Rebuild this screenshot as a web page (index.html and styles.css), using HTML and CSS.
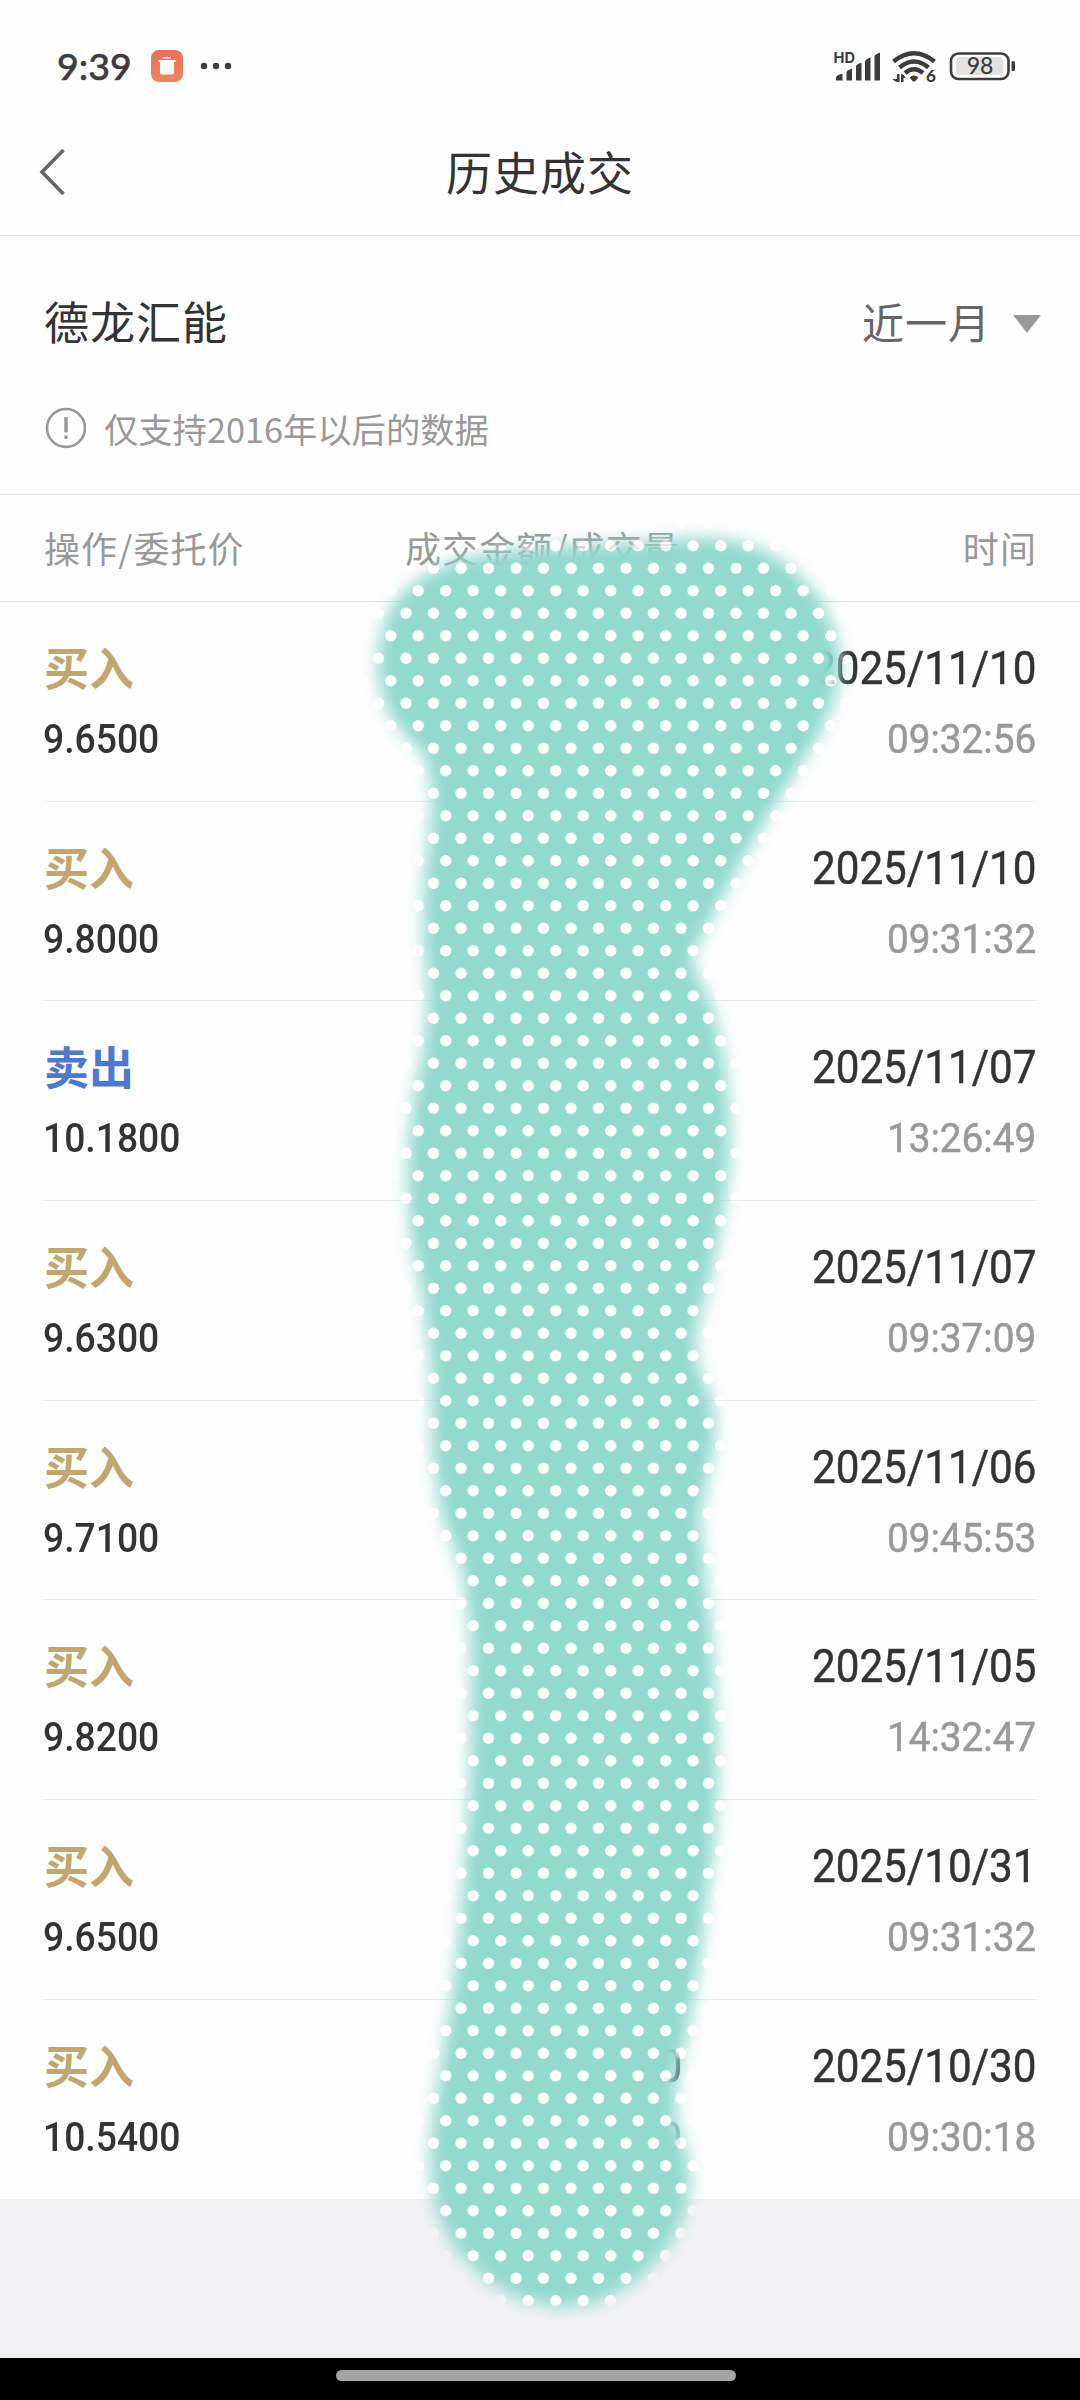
FILE: index.html
```html
<!DOCTYPE html>
<html lang="zh-CN">
<head>
<meta charset="utf-8">
<title>历史成交</title>
<link rel="stylesheet" href="styles.css">
</head>
<body>
<div class="screen">
  <div class="status">
    <span class="clock">9:39</span>
    <svg class="app" width="34" height="34" viewBox="0 0 34 34"><defs><linearGradient id="og" x1="0" y1="0" x2="0" y2="1"><stop offset="0" stop-color="#ea7058"/><stop offset="1" stop-color="#ea8660"/></linearGradient></defs><rect x="1" y="1" width="32" height="32" rx="8" fill="url(#og)"/><path d="M13 8h8v1.500h-8zM8.500 11h17v2h-1.500v10.500q0 2-2 2h-10q-2 0-2-2V13H8.500z" fill="#fff"/></svg>
    <svg class="more" width="34" height="8" viewBox="0 0 34 8"><g fill="#3c3c3c"><circle cx="4" cy="4" r="3.200"/><circle cx="16" cy="4" r="3.200"/><circle cx="28" cy="4" r="3.200"/></g></svg>
    <svg class="signals" width="190" height="40" viewBox="830 46 190 40">
      <text class="hd" x="833.500" y="62.500" textLength="21.500" lengthAdjust="spacingAndGlyphs">HD</text>
      <g fill="#3c3c3c">
        <path d="M836 80.500v-3q0-2 6.500-4v7zM846.500 80.500v-8q0-2 5.500-4v12zM856 80.500v-14q0-2 5.500-4v18zM865 80.500v-19q0-2 5.500-4v23zM874.500 80.500v-24q0-2 5.500-4v28z"/>
        <path d="M909.500 77.500q4.500-4 9 0l-3 3.500q-1.500 1-3 0z"/>
        <path d="M892.500 79h4.500v-5h2.500v8h-2.500q-2 0-4.500-3zM901 82v-8q3 0 4.500 4h-2v4z"/>
      </g>
      <g fill="none" stroke="#3c3c3c" stroke-width="4.500"><path d="M893.500 61.500q20.500-16.500 41 0M899.500 67.500q14.500-12 29 0M905 73q9-7.500 18 0"/></g>
      <text class="six" x="926" y="82">6</text>
      <rect x="951" y="53.500" width="57.500" height="25.500" rx="7.500" fill="#fff" stroke="#3c3c3c" stroke-width="2.600"/>
      <rect x="956" y="57" width="47" height="18" rx="3.500" fill="#e2e2e2"/>
      <text class="pct" x="980" y="74" text-anchor="middle">98</text>
      <rect x="1011.500" y="61" width="3.500" height="10" rx="1.500" fill="#3c3c3c"/>
    </svg>
  </div>
  <header class="nav">
    <svg class="back" width="28" height="48" viewBox="0 0 28 48"><path d="M24.500 2L3 24l21.500 22" fill="none" stroke="#666" stroke-width="3.600"/></svg>
    <h1 class="title">历史成交</h1>
  </header>
  <section class="filter">
    <div class="filter-row"><span class="stock">德龙汇能</span><span class="period">近一月<i class="caret"></i></span></div>
    <div class="notice"><svg width="42" height="42" viewBox="0 0 42 42"><circle cx="22" cy="21" r="19" fill="none" stroke="#999" stroke-width="2.600"/><path d="M22 10v15.500M22 28.500v3.500" stroke="#999" stroke-width="3.400"/></svg><span>仅支持2016年以后的数据</span></div>
  </section>
  <div class="thead"><span>操作/委托价</span><span class="mid">成交金额/成交量</span><span class="end">时间</span></div>
  <main class="list">
    <div class="row"><div class="left"><span class="op">买入</span><span class="price">9.6500</span></div><div class="right"><span class="date">2025/11/10</span><span class="time">09:32:56</span></div></div>
    <div class="row"><div class="left"><span class="op">买入</span><span class="price">9.8000</span></div><div class="right"><span class="date">2025/11/10</span><span class="time">09:31:32</span></div></div>
    <div class="row"><div class="left"><span class="op sell">卖出</span><span class="price">10.1800</span></div><div class="right"><span class="date">2025/11/07</span><span class="time">13:26:49</span></div></div>
    <div class="row"><div class="left"><span class="op">买入</span><span class="price">9.6300</span></div><div class="right"><span class="date">2025/11/07</span><span class="time">09:37:09</span></div></div>
    <div class="row"><div class="left"><span class="op">买入</span><span class="price">9.7100</span></div><div class="right"><span class="date">2025/11/06</span><span class="time">09:45:53</span></div></div>
    <div class="row"><div class="left"><span class="op">买入</span><span class="price">9.8200</span></div><div class="right"><span class="date">2025/11/05</span><span class="time">14:32:47</span></div></div>
    <div class="row"><div class="left"><span class="op">买入</span><span class="price">9.6500</span></div><div class="right"><span class="date">2025/10/31</span><span class="time">09:31:32</span></div></div>
    <div class="row"><div class="left"><span class="op">买入</span><span class="price">10.5400</span></div><div class="amount"><span class="date">0</span><span class="time">0</span></div><div class="right"><span class="date">2025/10/30</span><span class="time">09:30:18</span></div></div>
  </main>
  <div class="backdrop"></div>
  <div class="homebar"><i></i></div>
  <svg class="brush" width="1080" height="2400" viewBox="0 0 1080 2400">
    <defs>
      <pattern id="dots" width="27.500" height="45" patternUnits="userSpaceOnUse"><rect width="27.500" height="45" fill="#92d9ce"/><circle cx="5.700" cy="5.700" r="5.700" fill="#fff"/><circle cx="21" cy="28.200" r="5.700" fill="#fff"/></pattern>
      <filter id="soft" x="300" y="450" width="620" height="1930" filterUnits="userSpaceOnUse"><feMorphology operator="erode" radius="1"/><feGaussianBlur stdDeviation="8"/></filter>
      <mask id="stroke" maskUnits="userSpaceOnUse" x="0" y="0" width="1080" height="2400"><path filter="url(#soft)" fill="#fff" d="M701 536L640 541 560 545 502 550 455 559 427 572 402 591 386 613 377 645 377 680 386 712 404 737 425 758 431 800 428 833 423 880 422 933 426 985 426 1010 422 1050 412 1100 407 1150 406 1190 410 1242 422 1303 429 1364 431 1455 440 1515 451 1545 463 1582 469 1640 470 1690 468 1788 462 1879 456 1950 450 2000 442 2050 434 2100 428 2150 430 2183 437 2217 454 2250 484 2281 520 2301 560 2309 600 2303 639 2281 668 2250 685 2217 692 2183 688 2150 677 2117 678 2083 685 2050 695 2000 702 1950 707 1909 715 1848 719 1787 718 1727 713 1636 704 1545 701 1515 708 1485 717 1436 714 1400 699 1364 696 1340 713 1273 725 1212 731 1160 731 1121 726 1061 715 1010 703 983 693 962 699 945 723 900 757 838 791 783 822 733 836 700 842 667 837 633 822 598 795 568 767 550 735 539z"/></mask>
    </defs>
    <rect x="330" y="500" width="560" height="1850" fill="url(#dots)" mask="url(#stroke)"/>
  </svg>
</div>
</body>
</html>
```
FILE: styles.css
```css
* { box-sizing: border-box; margin: 0; padding: 0; }
body { background: #fefefe; font-family: "Noto Sans CJK SC", sans-serif; color: #333; }
.screen { position: relative; width: 1080px; height: 2400px; display: flex; flex-direction: column; overflow: hidden; background: #fefefe; }
.status { height: 132px; padding: 0 60px 0 57px; display: flex; align-items: center; flex: none; }
.clock { font: 500 37.500px/40px "Lato", sans-serif; width: 93px; color: #3c3c3c; white-space: nowrap; -webkit-text-stroke: .5px #3c3c3c; }
.app { margin-right: 16px; }
.signals { margin-left: auto; }
.hd { font: 700 14.500px "Inter", sans-serif; fill: #3c3c3c; }
.six { font: 900 17px "Lato", sans-serif; fill: #3c3c3c; }
.pct { font: 500 23px "Lato", sans-serif; fill: #3c3c3c; }
.nav { height: 104px; display: grid; grid-template-columns: 200px 1fr 200px; align-items: center; border-bottom: 1px solid #e2e2e2; flex: none; padding-bottom: 23px; }
.back { margin-left: 39px; }
.title { font-size: 46px; font-weight: 400; line-height: 60px; text-align: center; letter-spacing: 1px; position: relative; top: -2px; }
.filter { height: 259px; padding: 47px 39px 0 44px; border-bottom: 1px solid #e2e2e2; flex: none; }
.filter-row { display: flex; justify-content: space-between; align-items: center; height: 76px; }
.stock { font-size: 45px; letter-spacing: 1px; line-height: 60px; }
.period { font-size: 42px; line-height: 60px; letter-spacing: 1px; color: #666; display: flex; align-items: center; gap: 22px; }
.caret { border: 14px solid transparent; border-top: 18px solid #999; border-bottom: 0; margin-top: 5px; }
.notice { display: flex; align-items: center; gap: 18px; height: 42px; margin-top: 48px; color: #999; font-size: 34.300px; line-height: 40px; }
.thead { height: 107px; display: grid; grid-template-columns: 361px 400px 1fr; align-items: center; padding: 0 43px 3px 44px; color: #999; font-size: 36px; letter-spacing: 1.100px; border-bottom: 1px solid #e2e2e2; flex: none; }
.end { text-align: right; }
.list { padding: 0 43px; height: 1597px; flex: none; }
.row { height: 199.700px; border-bottom: 1px solid #ebebeb; display: grid; grid-template-columns: 1fr 1fr 1fr; padding-top: 33px; }
.row:last-child { border-bottom: 0; }
.left, .right, .amount { display: flex; flex-direction: column; }
.right { grid-column: 3; align-items: flex-end; padding-right: 1px; }
.amount { grid-column: 2; align-items: flex-end; padding-right: 24px; }
.op { font-size: 45px; line-height: 64px; height: 66px; font-weight: 700; color: #c1a76e; padding-left: 1px; }
.sell { color: #4f78cf; }
.price { font: 500 40.500px/60px "Roboto", sans-serif; transform: scaleX(.92); transform-origin: left; margin-top: 8px; }
.date { font: 400 46.500px/66px "Roboto", sans-serif; transform: scaleX(.907); transform-origin: right; -webkit-text-stroke: .5px #333; }
.time { font: 400 40.500px/60px "Roboto", sans-serif; color: #999; transform: scaleX(.955); transform-origin: right; margin-top: 8px; -webkit-text-stroke: .5px #999; }
.backdrop { flex: 1; background: #f1f1f3; }
.homebar { height: 42px; background: #000; display: flex; justify-content: center; padding: 12px 9px 0 0; flex: none; }
.homebar i { width: 400px; height: 11px; border-radius: 6px; background: #a5a5a5; }
.brush { position: absolute; left: 0; top: 0; }
```
